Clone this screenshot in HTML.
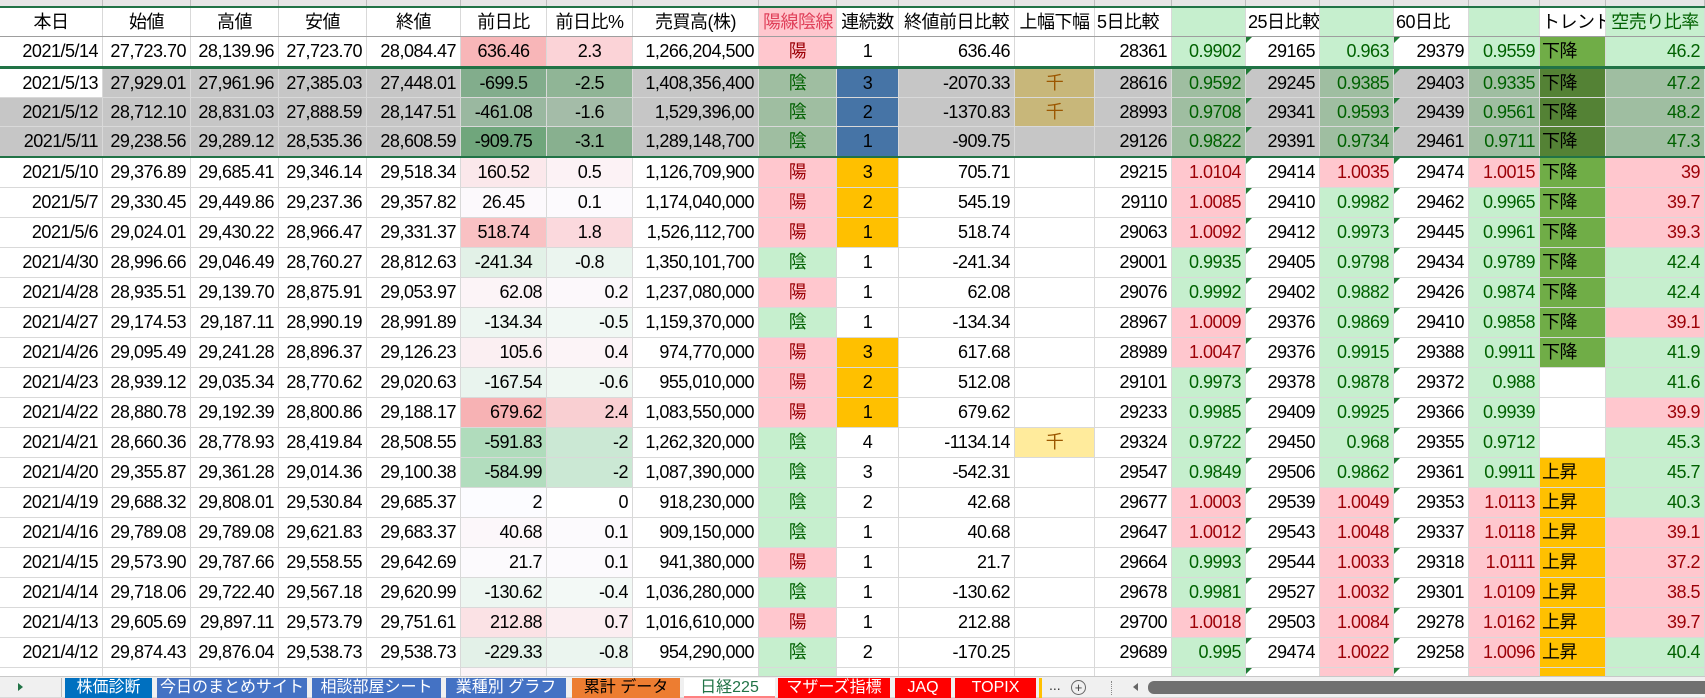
<!DOCTYPE html>
<html><head><meta charset="utf-8">
<style>
*{margin:0;padding:0;box-sizing:border-box}
body{width:1705px;height:697px;overflow:hidden;background:#fff;font-family:"Liberation Sans","Noto Sans CJK JP",sans-serif;font-size:18px;color:#000;position:relative}
.strip{position:absolute;left:0;top:0;width:1705px;height:6px;background:#e6e6e6;display:grid;grid-template-columns:103px 88px 88px 88px 94px 86px 86px 126px 78px 62px 116px 80px 77px 74px 74px 74px 75px 71px 66px 99px}
.strip div{border-right:1px solid #bdbdbd}
.gl{height:2px;background:#217346}
.g3{height:3px;background:#217346}
.r{display:grid;grid-template-columns:103px 88px 88px 88px 94px 86px 86px 126px 78px 62px 116px 80px 77px 74px 74px 74px 75px 71px 66px 99px;height:30px;border-bottom:1px solid #d9d9d9}
.h29{height:29px}
.r>div{border-right:1px solid #d9d9d9;padding:0 4px;line-height:29px;text-align:right;white-space:nowrap;overflow:hidden;letter-spacing:-0.5px;position:relative}
.r>div.c{text-align:center}
.r>div.l{text-align:left;padding-left:2px}
.hd{border-bottom:1px solid #9e9e9e}
.pk{background:#ffc7ce;color:#9c0006}
.gr{background:#c6efce;color:#006100}
.or{background:#ffc000}
.dn{background:#70ad47}
.up{background:#ffc000}
.yl{background:#ffeb9c;color:#9c5700}
.t::before{content:"";position:absolute;left:0;top:0;border-top:6px solid #1e7b34;border-right:6px solid transparent}
.sel>div{background:#c6c6c6}
.sel>div.sg{background:#9fbea1;color:#006100}
.sel>div.sb{background:#4674a6}
.sel>div.sy{background:#c8b77a;color:#9c5700}
.sel>div.sd{background:#548235}
.sel>div.w{background:#fff}
.tabs{position:absolute;left:0;top:676px;width:1705px;height:21px;background:#f0f0f0;border-top:1px solid #c8c8c8}
.tab{position:absolute;top:1px;height:20px;color:#fff;font-size:16px;line-height:20px;text-align:center;font-family:"Liberation Sans","Noto Sans CJK JP",sans-serif}
</style></head><body>
<div class="strip"><div></div><div></div><div></div><div></div><div></div><div></div><div></div><div></div><div></div><div></div><div></div><div></div><div></div><div></div><div></div><div></div><div></div><div></div><div></div><div></div></div>
<div style="position:absolute;top:6px;left:0;width:1705px">
<div class="gl"></div>
<div class="r h29 hd"><div class="c">本日</div><div class="c">始値</div><div class="c">高値</div><div class="c">安値</div><div class="c">終値</div><div class="c">前日比</div><div class="c">前日比%</div><div class="c">売買高(株)</div><div class="c pk" style="color:#e0405a">陽線陰線</div><div class="c">連続数</div><div class="c">終値前日比較</div><div class="c">上幅下幅</div><div class="l">5日比較</div><div class="gr"></div><div class="l">25日比較</div><div class="gr"></div><div class="l">60日比</div><div class="gr"></div><div class="l">トレンド</div><div class="c gr">空売り比率</div></div>
<div class="r h29" style="border-bottom:none"><div>2021/5/14</div><div>27,723.70</div><div>28,139.96</div><div>27,723.70</div><div>28,084.47</div><div class="c" style="background:#f8b6b8">636.46</div><div class="c" style="background:#fbd3d7">2.3</div><div>1,266,204,500</div><div class="c pk">陽</div><div class="c">1</div><div>636.46</div><div></div><div>28361</div><div class="gr">0.9902</div><div class="t">29165</div><div class="gr">0.963</div><div class="t">29379</div><div class="gr">0.9559</div><div class="l dn">下降</div><div class="gr">46.2</div></div>
<div class="g3"></div>
<div class="r h29 sel"><div class="w">2021/5/13</div><div>27,929.01</div><div>27,961.96</div><div>27,385.03</div><div>27,448.01</div><div class="c" style="background:#82ad8c">-699.5</div><div class="c" style="background:#90b596">-2.5</div><div>1,408,356,400</div><div class="c sg">陰</div><div class="c sb">3</div><div>-2070.33</div><div class="c sy">千</div><div>28616</div><div class="sg">0.9592</div><div class="t">29245</div><div class="sg">0.9385</div><div class="t">29403</div><div class="sg">0.9335</div><div class="l sd">下降</div><div class="sg">47.2</div></div>
<div class="r h29 sel"><div>2021/5/12</div><div>28,712.10</div><div>28,831.03</div><div>27,888.59</div><div>28,147.51</div><div class="c" style="background:#9ab8a0">-461.08</div><div class="c" style="background:#a4bca8">-1.6</div><div>1,529,396,00</div><div class="c sg">陰</div><div class="c sb">2</div><div>-1370.83</div><div class="c sy">千</div><div>28993</div><div class="sg">0.9708</div><div class="t">29341</div><div class="sg">0.9593</div><div class="t">29439</div><div class="sg">0.9561</div><div class="l sd">下降</div><div class="sg">48.2</div></div>
<div class="r h29 sel" style="border-bottom:none"><div>2021/5/11</div><div>29,238.56</div><div>29,289.12</div><div>28,535.36</div><div>28,608.59</div><div class="c" style="background:#70a67c">-909.75</div><div class="c" style="background:#88b08f">-3.1</div><div>1,289,148,700</div><div class="c sg">陰</div><div class="c sb">1</div><div>-909.75</div><div></div><div>29126</div><div class="sg">0.9822</div><div class="t">29391</div><div class="sg">0.9734</div><div class="t">29461</div><div class="sg">0.9711</div><div class="l sd">下降</div><div class="sg">47.3</div></div>
<div class="gl"></div>
<div class="r"><div>2021/5/10</div><div>29,376.89</div><div>29,685.41</div><div>29,346.14</div><div>29,518.34</div><div class="c" style="background:#fbe8eb">160.52</div><div class="c" style="background:#fcf2f5">0.5</div><div>1,126,709,900</div><div class="c pk">陽</div><div class="c or">3</div><div>705.71</div><div></div><div>29215</div><div class="pk">1.0104</div><div class="t">29414</div><div class="pk">1.0035</div><div class="t">29474</div><div class="pk">1.0015</div><div class="l dn">下降</div><div class="pk">39</div></div>
<div class="r"><div>2021/5/7</div><div>29,330.45</div><div>29,449.86</div><div>29,237.36</div><div>29,357.82</div><div class="c" style="background:#fcf9fc">26.45</div><div class="c" style="background:#fcfafd">0.1</div><div>1,174,040,000</div><div class="c pk">陽</div><div class="c or">2</div><div>545.19</div><div></div><div>29110</div><div class="pk">1.0085</div><div class="t">29410</div><div class="gr">0.9982</div><div class="t">29462</div><div class="gr">0.9965</div><div class="l dn">下降</div><div class="pk">39.7</div></div>
<div class="r"><div>2021/5/6</div><div>29,024.01</div><div>29,430.22</div><div>28,966.47</div><div>29,331.37</div><div class="c" style="background:#f9c1c3">518.74</div><div class="c" style="background:#fbd9dd">1.8</div><div>1,526,112,700</div><div class="c pk">陽</div><div class="c or">1</div><div>518.74</div><div></div><div>29063</div><div class="pk">1.0092</div><div class="t">29412</div><div class="gr">0.9973</div><div class="t">29445</div><div class="gr">0.9961</div><div class="l dn">下降</div><div class="pk">39.3</div></div>
<div class="r"><div>2021/4/30</div><div>28,996.66</div><div>29,046.49</div><div>28,760.27</div><div>28,812.63</div><div class="c" style="background:#e2f1e7">-241.34</div><div class="c" style="background:#ebf5ef">-0.8</div><div>1,350,101,700</div><div class="c gr">陰</div><div class="c">1</div><div>-241.34</div><div></div><div>29001</div><div class="gr">0.9935</div><div class="t">29405</div><div class="gr">0.9798</div><div class="t">29434</div><div class="gr">0.9789</div><div class="l dn">下降</div><div class="gr">42.4</div></div>
<div class="r"><div>2021/4/28</div><div>28,935.51</div><div>29,139.70</div><div>28,875.91</div><div>29,053.97</div><div style="background:#fcf4f7">62.08</div><div style="background:#fcf8fb">0.2</div><div>1,237,080,000</div><div class="c pk">陽</div><div class="c">1</div><div>62.08</div><div></div><div>29076</div><div class="gr">0.9992</div><div class="t">29402</div><div class="gr">0.9882</div><div class="t">29426</div><div class="gr">0.9874</div><div class="l dn">下降</div><div class="gr">42.4</div></div>
<div class="r"><div>2021/4/27</div><div>29,174.53</div><div>29,187.11</div><div>28,990.19</div><div>28,991.89</div><div style="background:#edf6f1">-134.34</div><div style="background:#f1f8f4">-0.5</div><div>1,159,370,000</div><div class="c gr">陰</div><div class="c">1</div><div>-134.34</div><div></div><div>28967</div><div class="pk">1.0009</div><div class="t">29376</div><div class="gr">0.9869</div><div class="t">29410</div><div class="gr">0.9858</div><div class="l dn">下降</div><div class="pk">39.1</div></div>
<div class="r"><div>2021/4/26</div><div>29,095.49</div><div>29,241.28</div><div>28,896.37</div><div>29,126.23</div><div style="background:#fbeff2">105.6</div><div style="background:#fcf4f7">0.4</div><div>974,770,000</div><div class="c pk">陽</div><div class="c or">3</div><div>617.68</div><div></div><div>28989</div><div class="pk">1.0047</div><div class="t">29376</div><div class="gr">0.9915</div><div class="t">29388</div><div class="gr">0.9911</div><div class="l dn">下降</div><div class="gr">41.9</div></div>
<div class="r"><div>2021/4/23</div><div>28,939.12</div><div>29,035.34</div><div>28,770.62</div><div>29,020.63</div><div style="background:#e9f4ee">-167.54</div><div style="background:#eff7f2">-0.6</div><div>955,010,000</div><div class="c pk">陽</div><div class="c or">2</div><div>512.08</div><div></div><div>29101</div><div class="gr">0.9973</div><div class="t">29378</div><div class="gr">0.9878</div><div class="t">29372</div><div class="gr">0.988</div><div></div><div class="gr">41.6</div></div>
<div class="r"><div>2021/4/22</div><div>28,880.78</div><div>29,192.39</div><div>28,800.86</div><div>29,188.17</div><div style="background:#f7b2b4">679.62</div><div style="background:#f9cfd2">2.4</div><div>1,083,550,000</div><div class="c pk">陽</div><div class="c or">1</div><div>679.62</div><div></div><div>29233</div><div class="gr">0.9985</div><div class="t">29409</div><div class="gr">0.9925</div><div class="t">29366</div><div class="gr">0.9939</div><div></div><div class="pk">39.9</div></div>
<div class="r"><div>2021/4/21</div><div>28,660.36</div><div>28,778.93</div><div>28,419.84</div><div>28,508.55</div><div style="background:#b0dcbc">-591.83</div><div style="background:#cbe8d4">-2</div><div>1,262,320,000</div><div class="c gr">陰</div><div class="c">4</div><div>-1134.14</div><div class="c yl">千</div><div>29324</div><div class="gr">0.9722</div><div class="t">29450</div><div class="gr">0.968</div><div class="t">29355</div><div class="gr">0.9712</div><div></div><div class="gr">45.3</div></div>
<div class="r"><div>2021/4/20</div><div>29,355.87</div><div>29,361.28</div><div>29,014.36</div><div>29,100.38</div><div style="background:#b2ddbe">-584.99</div><div style="background:#cbe8d4">-2</div><div>1,087,390,000</div><div class="c gr">陰</div><div class="c">3</div><div>-542.31</div><div></div><div>29547</div><div class="gr">0.9849</div><div class="t">29506</div><div class="gr">0.9862</div><div class="t">29361</div><div class="gr">0.9911</div><div class="l up">上昇</div><div class="gr">45.7</div></div>
<div class="r"><div>2021/4/19</div><div>29,688.32</div><div>29,808.01</div><div>29,530.84</div><div>29,685.37</div><div style="background:#fcfcff">2</div><div>0</div><div>918,230,000</div><div class="c gr">陰</div><div class="c">2</div><div>42.68</div><div></div><div>29677</div><div class="pk">1.0003</div><div class="t">29539</div><div class="pk">1.0049</div><div class="t">29353</div><div class="pk">1.0113</div><div class="l up">上昇</div><div class="gr">40.3</div></div>
<div class="r"><div>2021/4/16</div><div>29,789.08</div><div>29,789.08</div><div>29,621.83</div><div>29,683.37</div><div style="background:#fcf7fa">40.68</div><div style="background:#fcfafd">0.1</div><div>909,150,000</div><div class="c gr">陰</div><div class="c">1</div><div>40.68</div><div></div><div>29647</div><div class="pk">1.0012</div><div class="t">29543</div><div class="pk">1.0048</div><div class="t">29337</div><div class="pk">1.0118</div><div class="l up">上昇</div><div class="pk">39.1</div></div>
<div class="r"><div>2021/4/15</div><div>29,573.90</div><div>29,787.66</div><div>29,558.55</div><div>29,642.69</div><div style="background:#fcfafd">21.7</div><div style="background:#fcfafd">0.1</div><div>941,380,000</div><div class="c pk">陽</div><div class="c">1</div><div>21.7</div><div></div><div>29664</div><div class="gr">0.9993</div><div class="t">29544</div><div class="pk">1.0033</div><div class="t">29318</div><div class="pk">1.0111</div><div class="l up">上昇</div><div class="pk">37.2</div></div>
<div class="r"><div>2021/4/14</div><div>29,718.06</div><div>29,722.40</div><div>29,567.18</div><div>29,620.99</div><div style="background:#edf6f1">-130.62</div><div style="background:#f3f9f6">-0.4</div><div>1,036,280,000</div><div class="c gr">陰</div><div class="c">1</div><div>-130.62</div><div></div><div>29678</div><div class="gr">0.9981</div><div class="t">29527</div><div class="pk">1.0032</div><div class="t">29301</div><div class="pk">1.0109</div><div class="l up">上昇</div><div class="pk">38.5</div></div>
<div class="r"><div>2021/4/13</div><div>29,605.69</div><div>29,897.11</div><div>29,573.79</div><div>29,751.61</div><div style="background:#fbe2e5">212.88</div><div style="background:#fbeef1">0.7</div><div>1,016,610,000</div><div class="c pk">陽</div><div class="c">1</div><div>212.88</div><div></div><div>29700</div><div class="pk">1.0018</div><div class="t">29503</div><div class="pk">1.0084</div><div class="t">29278</div><div class="pk">1.0162</div><div class="l up">上昇</div><div class="pk">39.7</div></div>
<div class="r"><div>2021/4/12</div><div>29,874.43</div><div>29,876.04</div><div>29,538.73</div><div>29,538.73</div><div style="background:#e3f1e8">-229.33</div><div style="background:#ebf5ef">-0.8</div><div>954,290,000</div><div class="c gr">陰</div><div class="c">2</div><div>-170.25</div><div></div><div>29689</div><div class="gr">0.995</div><div class="t">29474</div><div class="pk">1.0022</div><div class="t">29258</div><div class="pk">1.0096</div><div class="l up">上昇</div><div class="gr">40.4</div></div>
<div class="r"><div></div><div></div><div></div><div></div><div></div><div style="background:#fcf4f7"></div><div style="background:#fcf8fb"></div><div></div><div class="gr"></div><div></div><div></div><div></div><div></div><div class="gr"></div><div class="t"></div><div class="pk"></div><div class="t"></div><div class="pk"></div><div class="up"></div><div class="gr"></div></div>
</div>
<div class="tabs">
<div style="position:absolute;left:18px;top:6px;width:0;height:0;border-left:5px solid #217346;border-top:4px solid transparent;border-bottom:4px solid transparent"></div>
<div style="position:absolute;left:61px;top:1px;width:1px;height:19px;background:#bbb"></div>
<div class="tab" style="left:65px;width:87px;background:#0070c0">株価診断</div>
<div class="tab" style="left:157px;width:150px;background:#4472c4">今日のまとめサイト</div>
<div class="tab" style="left:312px;width:129px;background:#4472c4">相談部屋シート</div>
<div class="tab" style="left:446px;width:120px;background:#4472c4">業種別 グラフ</div>
<div class="tab" style="left:572px;width:108px;background:#ed7d31;color:#000">累計 データ</div>
<div class="tab" style="left:684px;width:91px;background:#fff;color:#217346;border-bottom:2px solid #ff8080">日経225</div>
<div class="tab" style="left:778px;width:112px;background:#ff0000">マザーズ指標</div>
<div class="tab" style="left:895px;width:56px;background:#ff0000">JAQ</div>
<div class="tab" style="left:955px;width:81px;background:#ff0000">TOPIX</div>
<div style="position:absolute;left:1039px;top:1px;width:3px;height:20px;background:#ffc000"></div>
<div style="position:absolute;left:1049px;top:0;font-size:14px;color:#333">...</div>
<div style="position:absolute;left:1071px;top:3px;width:15px;height:15px;border:1px solid #666;border-radius:50%;font-size:13px;line-height:13px;text-align:center;color:#444">+</div>
<div style="position:absolute;left:1111px;top:4px;width:0;height:14px;border-left:1px dotted #888"></div>
<div style="position:absolute;left:1133px;top:6px;width:0;height:0;border-right:5px solid #666;border-top:4px solid transparent;border-bottom:4px solid transparent"></div>
<div style="position:absolute;left:1148px;top:4px;width:557px;height:13px;background:#707070;border-radius:6px 0 0 6px"></div>
</div>
</body></html>
